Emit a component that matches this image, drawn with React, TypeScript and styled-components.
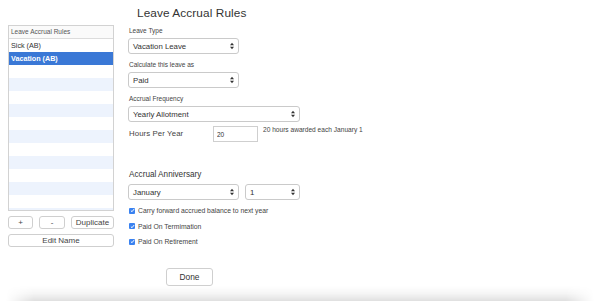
import * as React from "react"
import styled, { createGlobalStyle } from "styled-components"

const GlobalStyle = createGlobalStyle`
  html, body {
    margin: 0;
    padding: 0;
    background: #fff;
  }
  body {
    font-family: "Liberation Sans", Arial, sans-serif;
    color: #333;
  }
`

const Page = styled.div`
  display: flex;
  flex-direction: column;
  width: 600px;
  height: 301px;
  overflow: hidden;
`

const Content = styled.div`
  display: flex;
  flex: 1;
`

// 左側のルール一覧
const Sidebar = styled.div`
  display: flex;
  flex-direction: column;
  width: 106px;
  margin: 25px 0 0 8px;
`

const List = styled.div`
  display: flex;
  flex-direction: column;
  height: 186px;
  overflow: hidden;
  border: 1px solid #d2d2d2;
  box-sizing: border-box;
`

const ListHeader = styled.div`
  height: 12px;
  line-height: 12px;
  padding-left: 2px;
  font-size: 6.5px;
  color: #555;
  background: #fafafa;
  border-bottom: 1px solid #dcdcdc;
  flex-shrink: 0;
`

const Row = styled.div<{ $striped?: boolean; $selected?: boolean }>`
  height: 13px;
  line-height: 13px;
  padding-left: 2px;
  font-size: 7.2px;
  flex-shrink: 0;
  color: ${p => (p.$selected ? "#fff" : "#333")};
  font-weight: ${p => (p.$selected ? 700 : 400)};
  background: ${p => (p.$selected ? "#3a78d6" : p.$striped ? "#edf3fd" : "#fff")};
`

const ButtonRow = styled.div`
  display: flex;
  gap: 6px;
  margin-top: 5px;
`

const SmallButton = styled.button<{ $width: number }>`
  width: ${p => p.$width}px;
  height: 13px;
  padding: 0;
  font-family: "Liberation Sans", Arial, sans-serif;
  font-size: 8px;
  font-weight: 400;
  line-height: 11px;
  color: #444;
  background: #fff;
  border: 1px solid #cfcfcf;
  border-radius: 3px;
`

const WideButton = styled(SmallButton)`
  margin-top: 5px;
`

// 右側のフォーム
const Main = styled.div`
  display: flex;
  flex-direction: column;
  margin-left: 14px;
`

const Title = styled.h1`
  margin: 5px 0 0 9px;
  height: 16px;
  line-height: 16px;
  font-size: 11.8px;
  font-weight: 400;
  letter-spacing: 0.1px;
  color: #333;
`

const Field = styled.div`
  display: flex;
  flex-direction: column;
  margin-top: 6px;
  &:first-of-type {
    margin-top: 5px;
  }
`

const FieldLabel = styled.div`
  height: 10px;
  line-height: 10px;
  margin: 0 0 2px 1px;
  font-size: 6.5px;
  color: #444;
`

const SelectBox = styled.div<{ $width: number }>`
  display: flex;
  align-items: center;
  justify-content: space-between;
  width: ${p => p.$width}px;
  height: 16px;
  box-sizing: border-box;
  padding: 0 4px 0 4px;
  font-size: 7.8px;
  color: #333;
  background: #fff;
  border: 1px solid #cacaca;
  border-radius: 3px;
`

const HoursRow = styled.div`
  display: flex;
  align-items: flex-start;
  margin-top: 4px;
`

const HoursLabel = styled.div`
  width: 84px;
  padding-left: 1px;
  height: 16px;
  line-height: 16px;
  font-size: 7.8px;
  letter-spacing: 0.1px;
  color: #444;
`

const HoursInput = styled.input`
  width: 45px;
  height: 16px;
  box-sizing: border-box;
  padding: 0 3px;
  font-family: "Liberation Sans", Arial, sans-serif;
  font-size: 6.5px;
  color: #333;
  border: 1px solid #cfcfcf;
  border-radius: 0;
  outline: none;
`

const Hint = styled.div`
  margin-left: 5px;
  line-height: 8px;
  font-size: 6.6px;
  color: #444;
`

const SectionTitle = styled.div`
  margin-top: 27px;
  padding-left: 1px;
  height: 12px;
  line-height: 12px;
  font-size: 8.2px;
  color: #333;
`

const SelectRow = styled.div`
  display: flex;
  gap: 6px;
  margin-top: 3px;
`

const CheckList = styled.div`
  display: flex;
  flex-direction: column;
  margin-top: 3px;
`

const CheckRow = styled.label`
  display: flex;
  align-items: center;
  gap: 3px;
  height: 15.5px;
  padding-left: 1px;
  font-size: 6.8px;
  color: #444;
`

const CheckMark = styled.span`
  display: flex;
  align-items: center;
  justify-content: center;
  width: 6px;
  height: 6px;
  border-radius: 1px;
  background: #3a82f0;
`

const DoneButton = styled.button`
  width: 47px;
  height: 18px;
  margin: 18px 0 0 38px;
  padding: 0;
  font-family: "Liberation Sans", Arial, sans-serif;
  font-size: 8.4px;
  font-weight: 400;
  color: #333;
  background: #fff;
  border: 1px solid #cfcfcf;
  border-radius: 3px;
`

// 下部の影
const Shade = styled.div`
  height: 18px;
  margin: 0 6px;
  background: linear-gradient(
    to bottom,
    rgba(0, 0, 0, 0) 0%,
    rgba(0, 0, 0, 0.04) 50%,
    rgba(0, 0, 0, 0.12) 100%
  );
  mask-image: linear-gradient(to right, transparent, #000 28px, #000 calc(100% - 28px), transparent);
  -webkit-mask-image: linear-gradient(to right, transparent, #000 28px, #000 calc(100% - 28px), transparent);
`

const Arrows = () => (
  <svg width="4" height="8" viewBox="0 0 4 8">
    <path d="M0 3.2 L2 0.8 L4 3.2 Z" fill="#333" />
    <path d="M0 4.8 L2 7.2 L4 4.8 Z" fill="#333" />
  </svg>
)

const Select: React.VFC<{ value: string; width: number }> = ({ value, width }) => (
  <SelectBox $width={width}>
    <span>{value}</span>
    <Arrows />
  </SelectBox>
)

const Check: React.VFC<{ label: string }> = ({ label }) => (
  <CheckRow>
    <CheckMark>
      <svg width="5" height="5" viewBox="0 0 5 5">
        <path d="M0.9 2.6 L2 3.7 L4.1 1.1" stroke="#fff" strokeWidth="1" fill="none" />
      </svg>
    </CheckMark>
    {label}
  </CheckRow>
)

const rules = ["Sick (AB)", "Vacation (AB)"]

export default function App() {
  const rows = Array.from({ length: 14 }, (_, i) => rules[i] ?? "")
  return (
    <Page>
      <GlobalStyle />
      <Content>
        <Sidebar>
          <List>
            <ListHeader>Leave Accrual Rules</ListHeader>
            {rows.map((name, i) => (
              <Row key={i} $striped={i % 2 === 1} $selected={i === 1}>
                {name}
              </Row>
            ))}
          </List>
          <ButtonRow>
            <SmallButton $width={25}>+</SmallButton>
            <SmallButton $width={26}>-</SmallButton>
            <SmallButton $width={43}>Duplicate</SmallButton>
          </ButtonRow>
          <WideButton $width={106}>Edit Name</WideButton>
        </Sidebar>
        <Main>
          <Title>Leave Accrual Rules</Title>
          <Field>
            <FieldLabel>Leave Type</FieldLabel>
            <Select value="Vacation Leave" width={111} />
          </Field>
          <Field>
            <FieldLabel>Calculate this leave as</FieldLabel>
            <Select value="Paid" width={111} />
          </Field>
          <Field>
            <FieldLabel>Accrual Frequency</FieldLabel>
            <Select value="Yearly Allotment" width={172} />
          </Field>
          <HoursRow>
            <HoursLabel>Hours Per Year</HoursLabel>
            <HoursInput value="20" readOnly />
            <Hint>20 hours awarded each January 1</Hint>
          </HoursRow>
          <SectionTitle>Accrual Anniversary</SectionTitle>
          <SelectRow>
            <Select value="January" width={111} />
            <Select value="1" width={55} />
          </SelectRow>
          <CheckList>
            <Check label="Carry forward accrued balance to next year" />
            <Check label="Paid On Termimation" />
            <Check label="Paid On Retirement" />
          </CheckList>
          <DoneButton>Done</DoneButton>
        </Main>
      </Content>
      <Shade />
    </Page>
  )
}
